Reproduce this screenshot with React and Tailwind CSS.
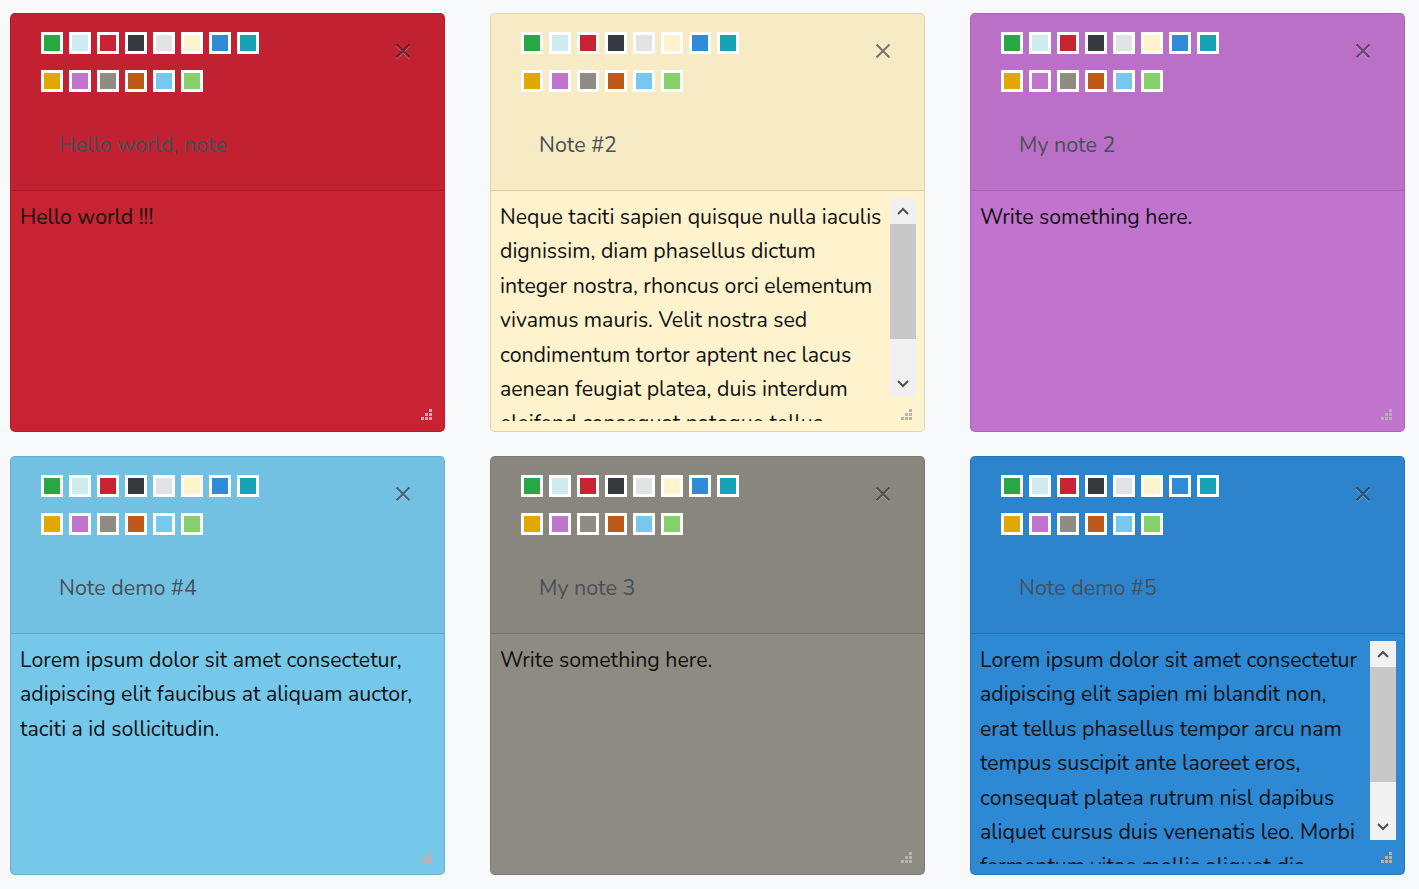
const SWATCHES = [
  ["#28a745", "#d1ecf1", "#c82333", "#343a40", "#e2e3e5", "#fff3cd", "#2e8bd8", "#17a2b8"],
  ["#e0a800", "#c174ce", "#8f8c84", "#bd5a1a", "#76c8ee", "#85d06b"],
];

const NOTES = [
  { bg: "bg-[#c82333]", title: "Hello world, note", text: "Hello world !!!" },
  {
    bg: "bg-[#fff3cd]",
    title: "Note #2",
    scroll: true,
    text: "Neque taciti sapien quisque nulla iaculis dignissim, diam phasellus dictum integer nostra, rhoncus orci elementum vivamus mauris. Velit nostra sed condimentum tortor aptent nec lacus aenean feugiat platea, duis interdum eleifend consequat natoque tellus.",
  },
  { bg: "bg-[#c174ce]", title: "My note 2", text: "Write something here." },
  {
    bg: "bg-[#76c8ea]",
    title: "Note demo #4",
    text: "Lorem ipsum dolor sit amet consectetur, adipiscing elit faucibus at aliquam auctor, taciti a id sollicitudin.",
  },
  { bg: "bg-[#8e8b82]", title: "My note 3", text: "Write something here." },
  {
    bg: "bg-[#2e89d4]",
    title: "Note demo #5",
    scroll: true,
    text: "Lorem ipsum dolor sit amet consectetur adipiscing elit sapien mi blandit non, erat tellus phasellus tempor arcu nam tempus suscipit ante laoreet eros, consequat platea rutrum nisl dapibus aliquet cursus duis venenatis leo. Morbi fermentum vitae mollis aliquet dis.",
  },
];

function CloseX() {
  return (
    <svg width="16" height="16" viewBox="0 0 16 16" className="mt-[11px] mr-[-1px] [filter:drop-shadow(0_1px_0_rgba(255,255,255,0.6))]">
      <path d="M1.5 1.5 L14.5 14.5 M14.5 1.5 L1.5 14.5" stroke="rgba(0,0,0,0.5)" strokeWidth="2.2" fill="none" />
    </svg>
  );
}

function Grip() {
  return (
    <svg width="11" height="11" viewBox="0 0 11 11" className="absolute right-[12px] bottom-[11px]">
      {[[8, 0], [4, 4], [8, 4], [0, 8], [4, 8], [8, 8]].map(([x, y], i) => (
        <rect key={i} x={x} y={y} width="3" height="3" fill="#b4b4b4" />
      ))}
    </svg>
  );
}

function Scrollbar() {
  return (
    <div className="w-[26px] h-[199px] shrink-0 mt-[-2px] bg-[#f1f1f1] flex flex-col">
      <div className="h-[26px] flex items-center justify-center">
        <svg width="12" height="8" viewBox="0 0 12 8">
          <path d="M1 7 L6 2 L11 7" stroke="#505050" strokeWidth="2" fill="none" />
        </svg>
      </div>
      <div className="h-[115px] bg-[#c8c8c8]" />
      <div className="flex-1" />
      <div className="h-[26px] flex items-center justify-center">
        <svg width="12" height="8" viewBox="0 0 12 8">
          <path d="M1 1 L6 6 L11 1" stroke="#505050" strokeWidth="2" fill="none" />
        </svg>
      </div>
    </div>
  );
}

function Note({ bg, title, text, scroll }) {
  return (
    <div className={`${bg} relative h-[419px] rounded-[5px] border border-black/[0.125] flex flex-col overflow-hidden`}>
      <div className="h-[177px] shrink-0 bg-black/[0.03] border-b border-black/[0.125] pt-[18px] pl-[30px] pr-[34px]">
        <div className="flex items-start justify-between">
          <div className="flex flex-col gap-[16px]">
            {SWATCHES.map((row, r) => (
              <div key={r} className="flex gap-[6px]">
                {row.map((c) => (
                  <div key={c} className="w-[22px] h-[22px] border-[3px] border-white" style={{ background: c }} />
                ))}
              </div>
            ))}
          </div>
          <CloseX />
        </div>
        <div className="mt-[38px] pl-[18px] text-[21.5px] leading-[30px] text-[#495057]">{title}</div>
      </div>
      <div className="flex-1 min-h-0 flex items-start pt-[9px] pl-[9px] pr-[8px] pb-[10px]">
        <div className="flex-1 h-full overflow-hidden text-[21.3px] leading-[34.4px] text-[#111] pr-[4px]">{text}</div>
        {scroll && <Scrollbar />}
      </div>
      <Grip />
    </div>
  );
}

export default function App() {
  return (
    <div className="min-h-screen bg-[#f8f9fb] pt-[13px] pl-[10px] font-['Nunito','Lato',sans-serif]">
      <div className="grid grid-cols-[435px_435px_435px] gap-x-[45px] gap-y-[24px]">
        {NOTES.map((n, i) => (
          <Note key={i} {...n} />
        ))}
      </div>
    </div>
  );
}
